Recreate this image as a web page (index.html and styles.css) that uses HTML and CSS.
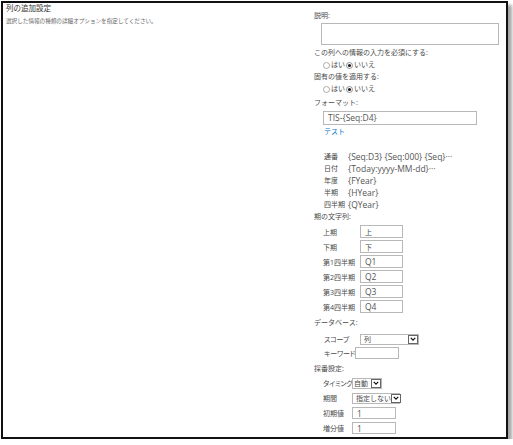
FILE: index.html
```html
<!DOCTYPE html>
<html lang="ja">
<head>
<meta charset="utf-8">
<title>列の追加設定</title>
<link rel="stylesheet" href="styles.css">
</head>
<body>
<div class="frame">
  <div class="left">
    <div class="title">列の追加設定</div>
    <div class="desc">選択した情報の種類の詳細オプションを指定してください。</div>
  </div>
  <div class="right">
    <div class="label">説明:</div>
    <div class="textarea"></div>
    <div class="label gap2">この列への情報の入力を必須にする:</div>
    <div class="radios">
      <svg class="radio" viewBox="0 0 7 7" width="7" height="7"><circle cx="3.5" cy="3.5" r="3" fill="#fff" stroke="#8a8a8a" stroke-width="0.7"/></svg><span class="rtext">はい</span>
      <svg class="radio" viewBox="0 0 7 7" width="7" height="7"><circle cx="3.5" cy="3.5" r="3" fill="#fff" stroke="#666" stroke-width="0.7"/><circle cx="3.5" cy="3.5" r="1.6" fill="#222"/></svg><span class="rtext">いいえ</span>
    </div>
    <div class="label">固有の値を適用する:</div>
    <div class="radios">
      <svg class="radio" viewBox="0 0 7 7" width="7" height="7"><circle cx="3.5" cy="3.5" r="3" fill="#fff" stroke="#8a8a8a" stroke-width="0.7"/></svg><span class="rtext">はい</span>
      <svg class="radio" viewBox="0 0 7 7" width="7" height="7"><circle cx="3.5" cy="3.5" r="3" fill="#fff" stroke="#666" stroke-width="0.7"/><circle cx="3.5" cy="3.5" r="1.6" fill="#222"/></svg><span class="rtext">いいえ</span>
    </div>
    <div class="label gap2">フォーマット:</div>
    <div class="fmt-input lat">TIS-{Seq:D4}</div>
    <div class="link">テスト</div>
    <div class="spacer"></div>
    <div class="fmt-row"><span class="fmt-label">通番</span><span class="fmt-val lat">{Seq:D3} {Seq:000} {Seq}···</span></div>
    <div class="fmt-row"><span class="fmt-label">日付</span><span class="fmt-val lat">{Today:yyyy-MM-dd}···</span></div>
    <div class="fmt-row"><span class="fmt-label">年度</span><span class="fmt-val lat">{FYear}</span></div>
    <div class="fmt-row"><span class="fmt-label">半期</span><span class="fmt-val lat">{HYear}</span></div>
    <div class="fmt-row"><span class="fmt-label">四半期</span><span class="fmt-val lat">{QYear}</span></div>
    <div class="label">期の文字列:</div>
    <div class="periods">
      <div class="prow"><span class="plabel">上期</span><span class="box pbox">上</span></div>
      <div class="prow"><span class="plabel">下期</span><span class="box pbox">下</span></div>
      <div class="prow"><span class="plabel">第1四半期</span><span class="box pbox lat">Q1</span></div>
      <div class="prow"><span class="plabel">第2四半期</span><span class="box pbox lat">Q2</span></div>
      <div class="prow"><span class="plabel">第3四半期</span><span class="box pbox lat">Q3</span></div>
      <div class="prow"><span class="plabel">第4四半期</span><span class="box pbox lat">Q4</span></div>
    </div>
    <div class="label db">データベース:</div>
    <div class="dbrows">
      <div class="drow"><span class="dlabel kana">スコープ</span><span class="box sel scope"><span class="seltext">列</span><span class="arrow"><svg viewBox="0 0 9 9" width="9" height="9"><path d="M2 3.2 L4.5 5.8 L7 3.2" fill="none" stroke="#111" stroke-width="1.4"/></svg></span></span></div>
      <div class="drow"><span class="dlabel kana">キーワード</span><span class="box kw"></span></div>
    </div>
    <div class="label num">採番設定:</div>
    <div class="nrows">
      <div class="nrow"><span class="nlabel kana">タイミング</span><span class="box sel timing"><span class="seltext">自動</span><span class="arrow"><svg viewBox="0 0 9 9" width="9" height="9"><path d="M2 3.2 L4.5 5.8 L7 3.2" fill="none" stroke="#111" stroke-width="1.4"/></svg></span></span></div>
      <div class="nrow"><span class="nlabel">期間</span><span class="box sel period"><span class="seltext">指定しない</span><span class="arrow"><svg viewBox="0 0 9 9" width="9" height="9"><path d="M2 3.2 L4.5 5.8 L7 3.2" fill="none" stroke="#111" stroke-width="1.4"/></svg></span></span></div>
      <div class="nrow"><span class="nlabel">初期値</span><span class="box nbox lat">1</span></div>
      <div class="nrow"><span class="nlabel">増分値</span><span class="box nbox lat">1</span></div>
    </div>
  </div>
</div>
</body>
</html>
```
FILE: styles.css
```css
* { box-sizing: border-box; }
html, body { margin: 0; padding: 0; background: #fff; }
body {
  font-family: "Open Sans", "Noto Sans CJK JP", sans-serif;
  color: #4a4a4a;
  font-size: 7px;
}
.lat { font-size: 8.5px; color: #555; }
.kana { font-feature-settings: "palt"; letter-spacing: -0.2px; }
.frame {
  margin: 1px 0 0 1px;
  width: 507px;
  height: 438px;
  border: 2px solid #111;
  box-shadow: 4px 4px 3px rgba(0, 0, 0, 0.35);
  display: flex;
  background: #fff;
}
.left {
  width: 308px;
  flex: 0 0 308px;
  padding-left: 3px;
}
.title {
  font-size: 7.5px;
  line-height: 10px;
  color: #333;
}
.desc {
  font-size: 5.6px;
  line-height: 10px;
  margin-top: 3px;
  color: #666;
  white-space: nowrap;
}
.right {
  flex: 1;
  padding: 7px 0 0 3px;
  display: flex;
  flex-direction: column;
  align-items: flex-start;
}
.label {
  line-height: 12px;
  height: 12px;
  white-space: nowrap;
}
.gap2 { margin-top: 2px; }
.textarea {
  margin: 1px 0 0 7px;
  width: 178px;
  height: 22px;
  border: 1px solid #b8b8b8;
  background: #fff;
}
.radios {
  height: 12px;
  display: flex;
  align-items: center;
  padding-left: 9px;
  white-space: nowrap;
}
.radio { width: 7px; height: 7px; margin-right: 1px; display: block; flex-shrink: 0; }
.rtext { margin-right: 1px; line-height: 12px; }
.fmt-input {
  margin: 2px 0 0 9px;
  width: 154px;
  height: 14px;
  border: 1px solid #b8b8b8;
  line-height: 12px;
  padding-left: 4px;
}
.link {
  margin-left: 10px;
  line-height: 12px;
  height: 12px;
  margin-top: 1px;
  color: #0072c6;
}
.spacer { height: 13px; }
.fmt-row {
  display: flex;
  align-items: center;
  line-height: 12px;
  height: 12px;
  padding-left: 10px;
  white-space: nowrap;
}
.fmt-label { min-width: 23px; margin-right: 1px; flex-shrink: 0; }
.periods {
  margin-top: 2px;
  display: flex;
  flex-direction: column;
  gap: 2px;
  padding-left: 9px;
}
.prow { display: flex; align-items: center; height: 13px; white-space: nowrap; }
.plabel { width: 37px; flex-shrink: 0; }
.box {
  display: flex;
  align-items: center;
  border: 1px solid #b8b8b8;
  background: #fff;
  flex-shrink: 0;
}
.pbox { width: 43px; height: 13px; padding-left: 4px; }
.db { margin-top: 4px; }
.dbrows {
  display: flex;
  flex-direction: column;
  padding-left: 10px;
  margin-top: 4px;
  gap: 2px;
}
.drow { display: flex; align-items: center; height: 12px; white-space: nowrap; }
.dlabel { width: 31px; flex-shrink: 0; }
.sel { justify-content: space-between; padding-left: 3px; }
.scope { width: 59px; height: 11px; margin-left: 5px; }
.kw { width: 44px; height: 12px; }
.seltext { line-height: 9px; }
.arrow {
  width: 10px;
  height: 9px;
  border: 1px solid #666;
  display: flex;
  align-items: center;
  justify-content: center;
  background: #fff;
}
.arrow svg { display: block; width: 8px; height: 8px; }
.num { margin-top: 4px; }
.nrows {
  display: flex;
  flex-direction: column;
  padding-left: 9px;
  margin-top: 2px;
  gap: 3px;
}
.nrow { display: flex; align-items: center; height: 12px; white-space: nowrap; }
.nlabel { width: 29px; flex-shrink: 0; }
.timing { width: 30px; height: 11px; padding-left: 1px; }
.period { width: 48px; height: 11px; padding-left: 3px; }
.nbox { width: 44px; height: 12px; padding-left: 4px; }
```
